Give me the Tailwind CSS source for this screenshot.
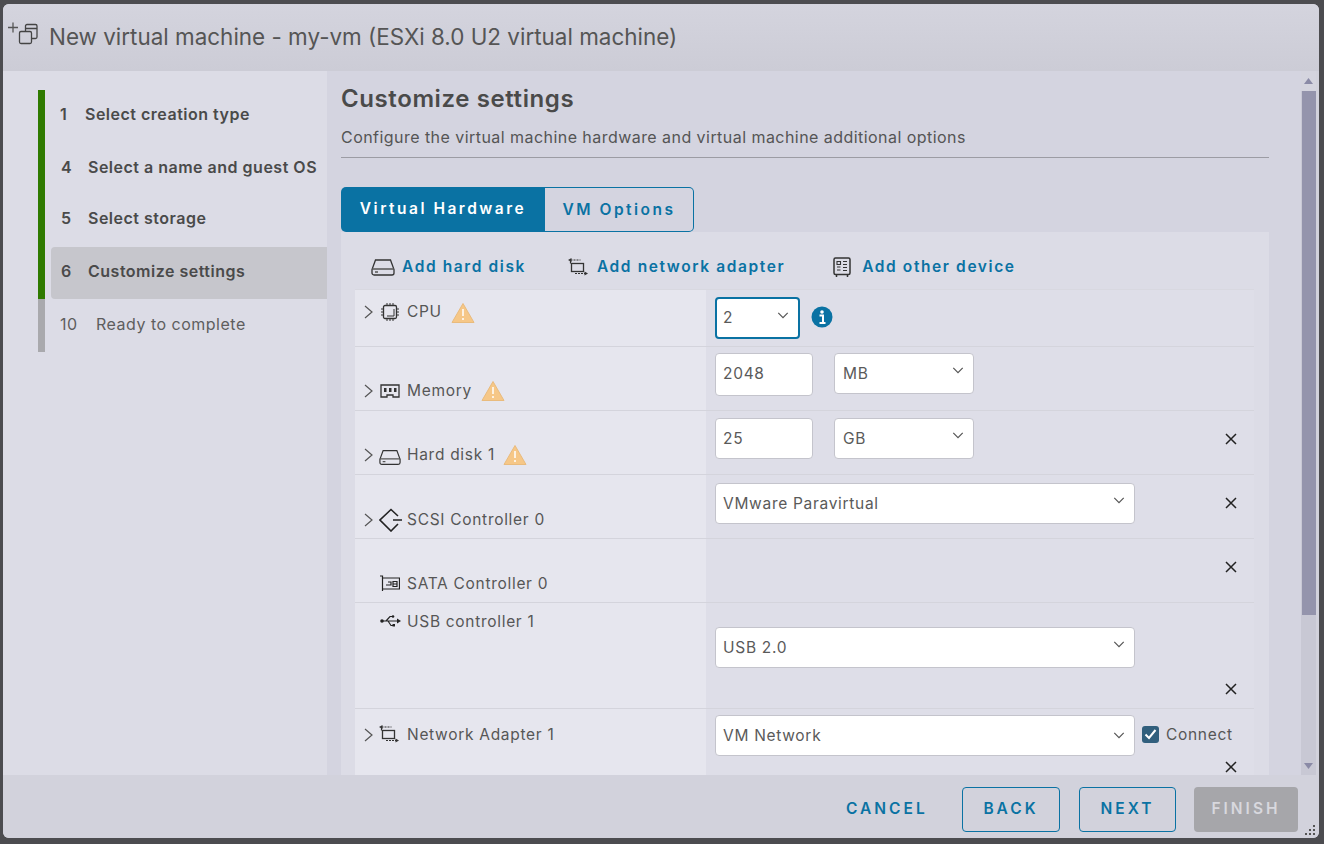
<!DOCTYPE html>
<html><head><meta charset="utf-8">
<script src="https://cdn.jsdelivr.net/npm/@tailwindcss/browser@4"></script>
</head>
<body class="m-0 overflow-hidden bg-[#4c4c50]">
<div class="w-[1324px] h-[844px] pt-[4px] pl-[3px] font-['Inter','Liberation_Sans',sans-serif] text-[#565656]">
<div class="w-[1316px] h-[834px] rounded-[6px] bg-[#d2d2dc] flex flex-col overflow-hidden relative">

<!-- header -->
<header class="h-[67px] shrink-0 flex items-center bg-gradient-to-b from-[#d4d4de] to-[#ccccd6]">
  <svg class="ml-[4px] mt-[-8px] shrink-0" width="34" height="28" viewBox="0 0 34 28" fill="none" stroke="#444" stroke-width="1.300">
    <path d="M1 7.500h10M6 2.500v10" stroke="#555"/>
    <rect x="12.500" y="11.500" width="12" height="12" rx="1.500"/><path d="M18.500 11.500V6a1.500 1.500 0 0 1 1.500-1.500h8.500A1.500 1.500 0 0 1 30 6v11a1.500 1.500 0 0 1-1.500 1.500h-4M18.500 8.500H30"/>
  </svg>
  <h1 class="ml-[8px] text-[22.450px] leading-none font-normal text-[#555]">New virtual machine - my-vm (ESXi 8.0 U2 virtual machine)</h1>
</header>

<div class="flex flex-1 min-h-0 pr-[3px]">
  <!-- sidebar -->
  <nav class="w-[324px] shrink-0 bg-[#dcdce6] pt-[19px] pl-[35px]">
    <ol class="text-[16px] tracking-[0.5px]">
      <li class="h-[53px] flex items-center border-l-[7px] border-[#2f7a00] pl-[15px] pb-[6px] font-semibold text-[#4a4a4a]"><span class="w-[25px]">1</span><span>Select creation type</span></li>
      <li class="h-[52px] flex items-center border-l-[7px] border-[#2f7a00] pl-[16px] pb-[4px] font-semibold text-[#4a4a4a]"><span class="w-[27px]">4</span><span>Select a name and guest OS</span></li>
      <li class="h-[52px] flex items-center border-l-[7px] border-[#2f7a00] pl-[16px] pb-[6px] font-semibold text-[#4a4a4a]"><span class="w-[27px]">5</span><span>Select storage</span></li>
      <li class="h-[52px] flex items-center border-l-[7px] border-[#2f7a00] pl-[6px] font-semibold text-[#4a4a4a]">
        <div class="flex items-center h-full flex-1 rounded-l-[4px] bg-[#c6c6cc] pl-[10px] pb-[4px]"><span class="w-[27px]">6</span><span>Customize settings</span></div>
      </li>
      <li class="h-[53px] flex items-center border-l-[7px] border-[#a9a9ad] pl-[15px] pb-[4px] text-[#5e5e5e]"><span class="w-[36px]">10</span><span>Ready to complete</span></li>
    </ol>
  </nav>

  <!-- main -->
  <main class="flex-1 min-w-0 bg-[#d4d4e0] pl-[14px] overflow-hidden">
    <h2 class="mt-[13px] text-[24px] leading-[30px] font-semibold tracking-[0.6px] text-[#4a4a4a]">Customize settings</h2>
    <p class="mt-[13px] text-[16px] leading-[20px] tracking-[0.45px] text-[#555]">Configure the virtual machine hardware and virtual machine additional options</p>
    <div class="mt-[10px] w-[928px] h-px bg-[#9c9ca4]"></div>

    <div class="mt-[29px] flex h-[45px] w-[353px] text-[15.500px] font-semibold tracking-[2.500px]">
      <button class="w-[204px] bg-[#0a72a3] text-white rounded-l-[5px] pb-[1px]">Virtual Hardware</button>
      <button class="w-[149px] border border-l-0 border-[#0a72a3] text-[#0a72a3] rounded-r-[5px]">VM Options</button>
    </div>

    <section class="w-[928px] h-[600px] bg-[#dcdce6] pl-[14px] pr-[15px]">
      <div class="h-[57px] flex items-center pl-[16px] pt-[13px] text-[15.500px] font-semibold tracking-[1.600px] text-[#0a72a3]">
        <svg class="mr-[7px]" width="24" height="18" viewBox="0 0 24 18" fill="none" stroke="#333" stroke-width="1.300"><path d="M4.500 2h15l3.500 9.500V15a2 2 0 0 1-2 2H3a2 2 0 0 1-2-2v-3.500z"/><path d="M1 11h22M4 14h3" stroke="#555"/></svg>
        <span>Add hard disk</span>
        <svg class="ml-[42px] mr-[9px]" width="20" height="19" viewBox="0 0 20 19" fill="none" stroke="#333" stroke-width="1.300"><rect x="3.500" y="5.500" width="12" height="8"/><path d="M2.500 2h10M7 15.500h10" stroke-width="1.200" stroke-dasharray="2 1"/><path d="M2.500 2v3.500" stroke-width="1.200"/><path d="M0 2l3.500-2v4zM20 15.500l-3.500-2v4z" fill="#333" stroke="none"/></svg>
        <span>Add network adapter</span>
        <svg class="ml-[48px] mr-[11px]" width="18" height="20" viewBox="0 0 18 20" fill="none" stroke="#333" stroke-width="1.500"><rect x="1" y="1" width="16" height="16.500" rx="1.500"/><path d="M3.500 18v2M14.500 18v2" stroke-width="1.500"/><path d="M4 4.500h3.500v3H4zM4 10h3.500M4 13h3.500M10 4.500h4M10 7.500h4M10 10.500h4M10 13.500h4" stroke-width="1.100"/></svg>
        <span>Add other device</span>
      </div>

      <!-- rows -->
      <div class="w-[899px] text-[15.500px] leading-[20px] tracking-[0.7px] text-[#565656] border-t border-[#d8d8e0]">

        <div class="grid grid-cols-[351px_548px] h-[57px] border-b border-[#d4d4dc]">
          <div class="bg-[#e6e6ee] flex items-start pl-[8px] pt-[12px]">
            <svg width="11" height="16" viewBox="0 0 11 16" fill="none" stroke="#555" stroke-width="1.200" class="mr-[6px] mt-[2px]"><path d="M2 2l7 6-7 6"/></svg>
            <svg width="20" height="20" viewBox="0 0 20 20" fill="none" stroke="#333" stroke-width="1.300" class="mr-[7px]"><rect x="3.500" y="3.500" width="13" height="13" rx="1.500"/><path d="M7 1v2M10 1v2M13 1v2M7 17v2M10 17v2M13 17v2M1 7h2M1 10h2M1 13h2M17 7h2M17 10h2M17 13h2M14 7v7H7" stroke-width="1"/></svg>
            <span>CPU</span>
            <svg width="24" height="22" viewBox="0 0 24 22" class="ml-[9px]"><path d="M12 1.500L23 20.500H1z" fill="#f6c787" stroke="#e9bb7d" stroke-linejoin="round"/><path d="M12 7v7M12 16v2" stroke="#fff" stroke-width="1.500"/></svg>
          </div>
          <div class="bg-[#dedee8] flex items-start pl-[9px] pt-[7px]">
            <div class="w-[85px] h-[42px] border-2 border-[#0a72a3] rounded-[4px] bg-white flex items-center justify-between pl-[6px] pr-[9px] text-[#5a5a5a]">
              <span>2</span>
              <svg width="12" height="7" viewBox="0 0 14 8" fill="none" stroke="#555" stroke-width="1.400" class="mt-[-6px]"><path d="M1.500 1l5.500 5.500L12.500 1"/></svg>
            </div>
            <svg width="22" height="22" viewBox="0 0 22 22" class="ml-[11px] mt-[9px]"><circle cx="11" cy="11" r="10.500" fill="#0a72a3"/><circle cx="11" cy="6" r="1.800" fill="#fff"/><path d="M8.500 9.500h3.500v7M8.500 17h6" stroke="#fff" stroke-width="2" fill="none"/></svg>
          </div>
        </div>

        <div class="grid grid-cols-[351px_548px] h-[64px] border-b border-[#d4d4dc]">
          <div class="bg-[#e6e6ee] flex items-start pl-[8px] pt-[34px]">
            <svg width="11" height="16" viewBox="0 0 11 16" fill="none" stroke="#555" stroke-width="1.200" class="mr-[6px] mt-[2px]"><path d="M2 2l7 6-7 6"/></svg>
            <svg width="20" height="20" viewBox="0 0 20 20" fill="none" stroke="#333" stroke-width="1.300" class="mr-[7px]"><path d="M1 4h18v12h-6v-2h-6v2H1z"/><path d="M4 7h2.500v4H4zM9 7h2.500v4H9zM14 7h2.500v4H14z" fill="#333" stroke="none"/></svg>
            <span>Memory</span>
            <svg width="24" height="22" viewBox="0 0 24 22" class="ml-[9px] mt-[-1px]"><path d="M12 1.500L23 20.500H1z" fill="#f6c787" stroke="#e9bb7d" stroke-linejoin="round"/><path d="M12 7v7M12 16v2" stroke="#fff" stroke-width="1.500"/></svg>
          </div>
          <div class="bg-[#dedee8] flex items-start pl-[9px] pt-[6px] gap-[21px]">
            <div class="w-[98px] h-[43px] border border-[#c4c4cc] rounded-[4px] bg-white flex items-center pl-[7px] pb-[2px] text-[#5a5a5a]">2048</div>
            <div class="w-[140px] h-[41px] border border-[#c4c4cc] rounded-[4px] bg-white flex items-center justify-between pl-[8px] pr-[9px] text-[#5a5a5a]"><span>MB</span><svg width="12" height="7" viewBox="0 0 14 8" fill="none" stroke="#555" stroke-width="1.400" class="mt-[-6px]"><path d="M1.500 1l5.500 5.500L12.500 1"/></svg></div>
          </div>
        </div>

        <div class="grid grid-cols-[351px_548px] h-[64px] border-b border-[#d4d4dc]">
          <div class="bg-[#e6e6ee] flex items-start pl-[8px] pt-[34px]">
            <svg width="11" height="16" viewBox="0 0 11 16" fill="none" stroke="#555" stroke-width="1.200" class="mr-[5px] mt-[2px]"><path d="M2 2l7 6-7 6"/></svg>
            <svg width="22" height="18" viewBox="0 0 24 18" fill="none" stroke="#333" stroke-width="1.300" class="mr-[6px] mt-[3px]"><path d="M4.500 2h15l3.500 9.500V15a2 2 0 0 1-2 2H3a2 2 0 0 1-2-2v-3.500z"/><path d="M1 11h22M4 14h3" stroke="#555"/></svg>
            <span>Hard disk 1</span>
            <svg width="24" height="22" viewBox="0 0 24 22" class="ml-[8px] mt-[-1px]"><path d="M12 1.500L23 20.500H1z" fill="#f6c787" stroke="#e9bb7d" stroke-linejoin="round"/><path d="M12 7v7M12 16v2" stroke="#fff" stroke-width="1.500"/></svg>
          </div>
          <div class="bg-[#dedee8] flex items-start pl-[9px] pt-[7px] pr-[16px]">
            <div class="w-[98px] h-[41px] border border-[#c4c4cc] rounded-[4px] bg-white flex items-center pl-[7px] text-[#5a5a5a]">25</div>
            <div class="ml-[21px] w-[140px] h-[41px] border border-[#c4c4cc] rounded-[4px] bg-white flex items-center justify-between pl-[8px] pr-[9px] text-[#5a5a5a]"><span>GB</span><svg width="12" height="7" viewBox="0 0 14 8" fill="none" stroke="#555" stroke-width="1.400" class="mt-[-6px]"><path d="M1.500 1l5.500 5.500L12.500 1"/></svg></div>
            <svg width="14" height="14" viewBox="0 0 14 14" stroke="#222" stroke-width="1.500" class="ml-auto mt-[14px]"><path d="M2 2l10 10M12 2L2 12"/></svg>
          </div>
        </div>

        <div class="grid grid-cols-[351px_548px] h-[64px] border-b border-[#d4d4dc]">
          <div class="bg-[#e6e6ee] flex items-start pl-[8px] pt-[35px]">
            <svg width="11" height="16" viewBox="0 0 11 16" fill="none" stroke="#555" stroke-width="1.200" class="mr-[5px] mt-[2px]"><path d="M2 2l7 6-7 6"/></svg>
            <svg width="23" height="24" viewBox="0 0 23 24" fill="none" stroke="#222" stroke-width="1.600" class="mr-[5px] mt-[-2px]"><path d="M19 8l-7-6.500L1 12l11 11 7-7M14 12h9"/></svg>
            <span>SCSI Controller 0</span>
          </div>
          <div class="bg-[#dedee8] flex items-start pl-[9px] pt-[8px] pr-[16px]">
            <div class="w-[420px] h-[41px] border border-[#c4c4cc] rounded-[4px] bg-white flex items-center justify-between pl-[7px] pr-[9px] text-[#5a5a5a]"><span>VMware Paravirtual</span><svg width="12" height="7" viewBox="0 0 14 8" fill="none" stroke="#555" stroke-width="1.400" class="mt-[-6px]"><path d="M1.500 1l5.500 5.500L12.500 1"/></svg></div>
            <svg width="14" height="14" viewBox="0 0 14 14" stroke="#222" stroke-width="1.500" class="ml-auto mt-[13px]"><path d="M2 2l10 10M12 2L2 12"/></svg>
          </div>
        </div>

        <div class="grid grid-cols-[351px_548px] h-[64px] border-b border-[#d4d4dc]">
          <div class="bg-[#e6e6ee] flex items-start pl-[25px] pt-[35px]">
            <svg width="20" height="18" viewBox="0 0 20 18" fill="none" stroke="#222" stroke-width="1.300" class="mr-[7px] mt-[1px]"><path d="M0 1h2.500v15M2.500 3h17v11h-17M8 7h3v3H6M13 6.500h4v5h-4zM13 9h4" stroke-width="1.200"/></svg>
            <span>SATA Controller 0</span>
          </div>
          <div class="bg-[#dedee8] flex items-start pr-[16px] pt-[21px]">
            <svg width="14" height="14" viewBox="0 0 14 14" stroke="#222" stroke-width="1.500" class="ml-auto"><path d="M2 2l10 10M12 2L2 12"/></svg>
          </div>
        </div>

        <div class="grid grid-cols-[351px_548px] h-[106px] border-b border-[#d4d4dc]">
          <div class="bg-[#e6e6ee] flex items-start pl-[25px] pt-[9px]">
            <svg width="21" height="14" viewBox="0 0 21 14" fill="none" stroke="#222" stroke-width="1.200" class="mr-[6px] mt-[2px]"><circle cx="2" cy="7" r="1.800" fill="#222" stroke="none"/><path d="M2 7h16M6 7l4-4.500h2M8 7l3 4.500h2"/><path d="M17 4.500L21 7l-4 2.500z" fill="#222" stroke="none"/><circle cx="13" cy="2.500" r="1.300" fill="#222" stroke="none"/><rect x="12.500" y="10" width="2.500" height="2.500" fill="#222" stroke="none"/></svg>
            <span>USB controller 1</span>
          </div>
          <div class="bg-[#dedee8] flex items-start pl-[9px] pt-[24px] pr-[16px]">
            <div class="w-[420px] h-[41px] border border-[#c4c4cc] rounded-[4px] bg-white flex items-center justify-between pl-[7px] pr-[9px] text-[#5a5a5a]"><span>USB 2.0</span><svg width="12" height="7" viewBox="0 0 14 8" fill="none" stroke="#555" stroke-width="1.400" class="mt-[-6px]"><path d="M1.500 1l5.500 5.500L12.500 1"/></svg></div>
            <svg width="14" height="14" viewBox="0 0 14 14" stroke="#222" stroke-width="1.500" class="ml-auto mt-[55px]"><path d="M2 2l10 10M12 2L2 12"/></svg>
          </div>
        </div>

        <div class="grid grid-cols-[351px_548px] h-[90px]">
          <div class="bg-[#e6e6ee] flex items-start pl-[8px] pt-[16px]">
            <svg width="11" height="16" viewBox="0 0 11 16" fill="none" stroke="#555" stroke-width="1.200" class="mr-[5px] mt-[2px]"><path d="M2 2l7 6-7 6"/></svg>
            <svg width="20" height="19" viewBox="0 0 20 19" fill="none" stroke="#333" stroke-width="1.300" class="mr-[8px]"><rect x="3.500" y="5.500" width="12" height="8"/><path d="M2.500 2h10M7 15.500h10" stroke-width="1.200" stroke-dasharray="2 1"/><path d="M2.500 2v3.500" stroke-width="1.200"/><path d="M0 2l3.500-2v4zM20 15.500l-3.500-2v4z" fill="#333" stroke="none"/></svg>
            <span>Network Adapter 1</span>
          </div>
          <div class="bg-[#dedee8] flex items-start pl-[9px] pt-[6px] relative">
            <div class="w-[420px] h-[41px] border border-[#c4c4cc] rounded-[4px] bg-white flex items-center justify-between pl-[7px] pr-[9px] text-[#5a5a5a]"><span>VM Network</span><svg width="12" height="7" viewBox="0 0 14 8" fill="none" stroke="#555" stroke-width="1.400"><path d="M1.500 1l5.500 5.500L12.500 1"/></svg></div>
            <div class="ml-[7px] mt-[11px] w-[17px] h-[17px] rounded-[3px] bg-[#315f7d] flex items-center justify-center"><svg width="13" height="11" viewBox="0 0 13 11" fill="none" stroke="#fff" stroke-width="2"><path d="M1.500 5.500l3.500 3.500 6.500-8"/></svg></div>
            <span class="ml-[7px] mt-[10px]">Connect</span>
            <svg width="14" height="14" viewBox="0 0 14 14" stroke="#222" stroke-width="1.500" class="absolute right-[16px] top-[51px]"><path d="M2 2l10 10M12 2L2 12"/></svg>
          </div>
        </div>
      </div>
    </section>
  </main>

  <!-- scrollbar -->
  <div class="w-[15px] shrink-0 bg-[#c8c8d4] flex flex-col items-center">
    <div class="h-[20px] w-full bg-[#d4d4de] flex items-center justify-center"><svg width="9" height="6" viewBox="0 0 9 6"><path d="M4.500 0L9 6H0z" fill="#8a8aa6"/></svg></div>
    <div class="w-[14px] h-[524px] bg-[#9494ac]"></div>
    <div class="flex-1"></div>
    <div class="h-[19px] w-full flex items-center justify-center"><svg width="9" height="6" viewBox="0 0 9 6"><path d="M4.500 6L9 0H0z" fill="#8a8aa6"/></svg></div>
  </div>
</div>

<!-- footer -->
<footer class="h-[63px] shrink-0 bg-[#d2d2dc] flex items-start pt-[12px] pl-[843px] text-[15.500px] font-semibold tracking-[3px] relative">
  <button class="w-[80px] h-[45px] pb-[2px] text-[#0a72a3]">CANCEL</button>
  <button class="ml-[36px] w-[98px] h-[45px] pb-[2px] border border-[#0a72a3] rounded-[4px] text-[#0a72a3]">BACK</button>
  <button class="ml-[19px] w-[97px] h-[45px] pb-[2px] border border-[#0a72a3] rounded-[4px] text-[#0a72a3]">NEXT</button>
  <button class="ml-[18px] w-[104px] h-[45px] pb-[2px] bg-[#a6a6aa] rounded-[4px] text-[#d8d8de]">FINISH</button>
  <svg width="12" height="12" viewBox="0 0 12 12" class="absolute right-[3px] bottom-[2px]" fill="#555"><rect x="9" y="1" width="2" height="2"/><rect x="5" y="5" width="2" height="2"/><rect x="9" y="5" width="2" height="2"/><rect x="1" y="9" width="2" height="2"/><rect x="5" y="9" width="2" height="2"/><rect x="9" y="9" width="2" height="2"/></svg>
</footer>
</div>
</div>
</body></html>
